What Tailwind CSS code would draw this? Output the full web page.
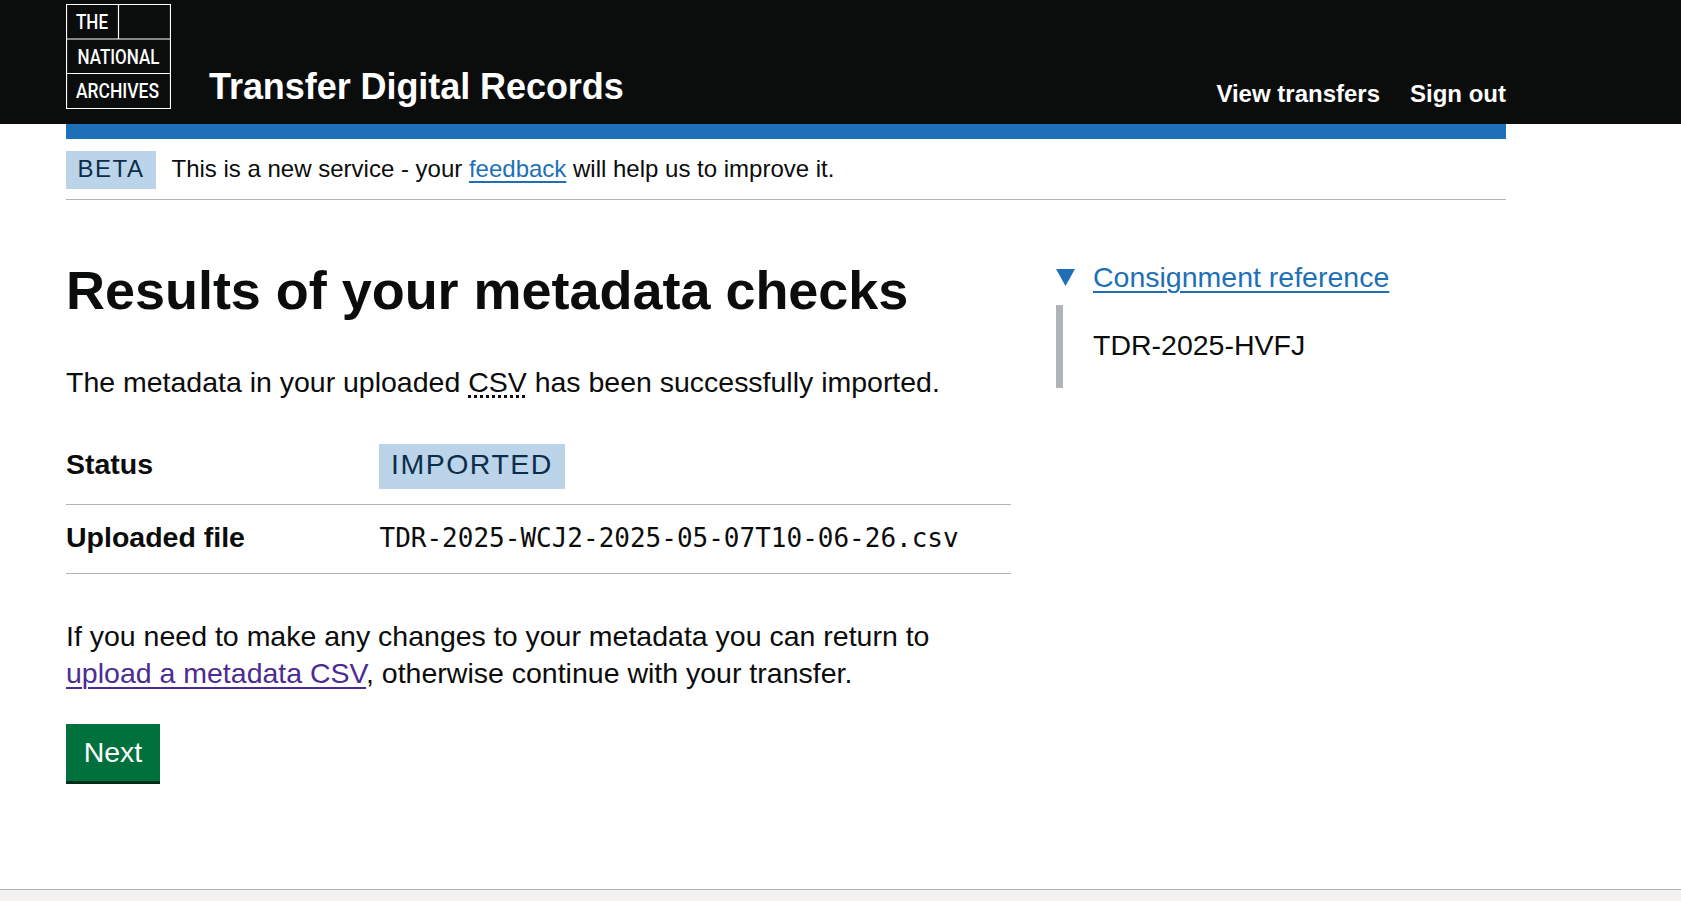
<!DOCTYPE html>
<html lang="en">
<head>
<meta charset="utf-8">
<title>Results of your metadata checks - Transfer Digital Records</title>
<script src="https://cdn.jsdelivr.net/npm/@tailwindcss/browser@4"></script>
</head>
<body class="flex h-[901px] flex-col overflow-hidden bg-white font-['Liberation_Sans',Arial,sans-serif] text-[28.5px] leading-[37.5px] text-[#0b0c0c]">
<header class="h-[124px] shrink-0 bg-[#0b0c0c] text-white">
  <div class="ml-[66px] flex h-full w-[1440px] items-start">
    <svg class="mt-1 h-[105px] w-[105px] shrink-0" viewBox="0 0 105 105" fill="none" role="img" aria-label="The National Archives">
      <path d="M.5.5h104v104H.5zM.5 35h104M.5 69.5h104M52.5.5V35" stroke="#fff" stroke-width="1.2"/>
      <g fill="#fff" font-family="Roboto, sans-serif" font-weight="500" font-size="19.5">
        <text x="10" y="25" textLength="32" lengthAdjust="spacingAndGlyphs">THE</text>
        <text x="11.5" y="59.5" textLength="82" lengthAdjust="spacingAndGlyphs">NATIONAL</text>
        <text x="10" y="94.3" textLength="83" lengthAdjust="spacingAndGlyphs">ARCHIVES</text>
      </g>
    </svg>
    <a class="ml-[38px] mt-[64px] text-[36px] font-bold leading-[45px] tracking-[-0.06px]">Transfer Digital Records</a>
    <nav class="ml-auto mt-[79px] flex gap-[30px] text-[24px] font-bold leading-[30px]"><a>View transfers</a><a>Sign out</a></nav>
  </div>
</header>
<div class="ml-[66px] w-[1440px] flex-1">
  <div class="h-[15px] bg-[#1d70b8]"></div>
  <div class="flex h-[61px] items-start border-b border-[#b1b4b6] pt-3 text-[24px] leading-[30px]">
    <strong class="h-[38px] w-[90px] bg-[#bbd4ea] pl-[11.5px] pt-[3px] font-normal tracking-[1.5px] text-[#0c2d4a]">BETA</strong>
    <span class="ml-[15.5px] pt-[3px]">This is a new service - your <a class="text-[#1d70b8] underline decoration-2 underline-offset-[4px]">feedback</a> will help us to improve it.</span>
  </div>
  <div class="flex">
    <main class="w-[945px] pt-[62px]">
      <h1 class="text-[54px] font-bold leading-[56px] tracking-[-0.03px]">Results of your metadata checks</h1>
      <p class="mt-[46px] tracking-[-0.01px]">The metadata in your uploaded <abbr class="underline decoration-dotted decoration-[3px] underline-offset-[3px]">CSV</abbr> has been successfully imported.</p>
      <dl class="mt-[28.5px]">
        <div class="flex h-[75px] border-b border-[#b1b4b6] pt-[14px]">
          <dt class="w-[313px] pt-[2px] font-bold">Status</dt>
          <dd><strong class="block h-[45px] w-[186px] bg-[#bbd4ea] pl-3 pt-[2px] font-normal tracking-[1.5px] text-[#0c2d4a]">IMPORTED</strong></dd>
        </div>
        <div class="flex h-[69px] border-b border-[#b1b4b6] pt-[14px]">
          <dt class="w-[313px] font-bold">Uploaded file</dt>
          <dd class="pl-[0.5px] pt-px font-['DejaVu_Sans_Mono',monospace] text-[26px]">TDR-2025-WCJ2-2025-05-07T10-06-26.csv</dd>
        </div>
      </dl>
      <p class="mt-[44px] leading-[37px]">If you need to make any changes to your metadata you can return to<br><a class="text-[#4c2c92] underline decoration-2 underline-offset-[4px]">upload a metadata CSV</a>, otherwise continue with your transfer.</p>
      <button class="mt-8 block h-[60px] w-[94px] border-b-[3px] border-[#002d18] bg-[#00703c] text-center leading-[57px] text-white">Next</button>
    </main>
    <aside class="ml-[45px] pt-[59px]">
      <div class="flex items-start">
        <svg class="mt-[10px] h-[17px] w-[19px]" viewBox="0 0 19 17"><path d="M0 0h19L9.5 17z" fill="#1d70b8"/></svg>
        <a class="ml-[18px] text-[#1d70b8] underline decoration-2 underline-offset-[4px]">Consignment reference</a>
      </div>
      <div class="mt-[8.5px] h-[83px] border-l-[7px] border-[#b1b4b6] pl-[30px] pt-[22px]">TDR-2025-HVFJ</div>
    </aside>
  </div>
</div>
<footer class="h-[12px] shrink-0 border-t border-[#b1b4b6] bg-[#f3f2f1]"></footer>
</body>
</html>
